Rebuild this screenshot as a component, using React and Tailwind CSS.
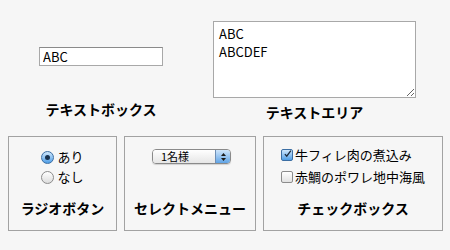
const font = "font-['Noto_Sans_CJK_JP',sans-serif]";

const Radio = ({ checked, label }) => (
  <div className="flex items-center h-[20px] gap-[3px]">
    {checked ? (
      <span className="w-[13px] h-[13px] rounded-full border border-[#3b6ea3] bg-gradient-to-b from-[#cfe7fb] to-[#4d9ee6] flex items-center justify-center">
        <span className="w-[5px] h-[5px] rounded-full bg-[#18314d]" />
      </span>
    ) : (
      <span className="w-[13px] h-[13px] rounded-full border border-[#8c8c8c] bg-gradient-to-b from-[#ffffff] to-[#dcdcdc]" />
    )}
    <span className="text-[13px] leading-[20px] text-black">{label}</span>
  </div>
);

const Check = ({ checked, label }) => (
  <div className="flex items-center h-[22px] gap-[2px]">
    {checked ? (
      <span className="w-[12px] h-[12px] rounded-[2px] border border-[#3b6ea3] bg-gradient-to-b from-[#cfe7fb] to-[#4d9ee6] flex items-center justify-center">
        <svg width="12" height="12" viewBox="0 0 12 12" className="-mt-[2px] ml-[1px]">
          <path d="M2.5 6.2 L5 9 L10.5 1.5" fill="none" stroke="#1d2c3d" strokeWidth="1.8" />
        </svg>
      </span>
    ) : (
      <span className="w-[12px] h-[12px] rounded-[2px] border border-[#8c8c8c] bg-gradient-to-b from-[#ffffff] to-[#e2e2e2]" />
    )}
    <span className="text-[13px] leading-[22px] text-black">{label}</span>
  </div>
);

const Box = ({ width, label, children }) => (
  <div className={`${width} h-[95px] border border-[#a2a2a2] flex flex-col items-center`}>
    {children}
    <div className="mt-auto pb-[12px] text-[14px] leading-[20px] font-bold text-black">
      {label}
    </div>
  </div>
);

export default function App() {
  return (
    <div className={`w-[450px] h-[250px] bg-[#f6f6f6] ${font} overflow-hidden`}>

      <div className="flex h-[136px]">

        <div className="w-[213px] pl-[39px] pt-[47px]">
          <div className="w-[124px] flex flex-col items-center">
            <input
              type="text"
              readOnly
              defaultValue="ABC"
              className="w-[124px] h-[19px] border border-[#a8a8a8] border-t-[#8a8a8a] bg-white px-[3px] text-[13px] leading-[17px] text-black outline-none"
            />
            <div className="mt-[33px] text-[14px] leading-[20px] font-bold text-black">
              テキストボックス
            </div>
          </div>
        </div>

        <div className="w-[203px] pt-[21px] flex flex-col items-center">
          <textarea
            readOnly
            defaultValue={"ABC\nABCDEF"}
            className="w-[203px] h-[77px] border border-[#a8a8a8] bg-white px-[5px] pt-[3px] text-[13px] leading-[18px] text-black outline-none"
          />
          <div className="mt-[4px] text-[14px] leading-[20px] font-bold text-black">
            テキストエリア
          </div>
        </div>

      </div>

      <div className="flex pl-[8px] gap-[7px]">

        <Box width="w-[109px]" label="ラジオボタン">
          <div className="pt-[10px] flex flex-col">
            <Radio checked label="あり" />
            <Radio label="なし" />
          </div>
        </Box>

        <Box width="w-[132px]" label="セレクトメニュー">
          <div className="pt-[12px] pl-[3px]">
            <div className="w-[79px] h-[15px] rounded-[4px] border border-[#8a8a8a] flex overflow-hidden shadow-[0_1px_1px_rgba(0,0,0,0.15)]">
              <div className="flex-1 bg-gradient-to-b from-[#ffffff] to-[#e6e6e6] pl-[8px] text-[11px] leading-[13px] text-black">
                1名様
              </div>
              <div className="w-[15px] border-l border-[#6f8fb5] bg-gradient-to-b from-[#cfe5fa] to-[#5fa4e6] flex items-center justify-center">
                <svg width="7" height="10" viewBox="0 0 7 10">
                  <path d="M3.5 1 L6 4 L1 4 Z" fill="#1b1b1b" />
                  <path d="M3.5 9 L6 6 L1 6 Z" fill="#1b1b1b" />
                </svg>
              </div>
            </div>
          </div>
        </Box>

        <Box width="w-[180px]" label="チェックボックス">
          <div className="pt-[7px] flex flex-col">
            <Check checked label="牛フィレ肉の煮込み" />
            <Check label="赤鯛のポワレ地中海風" />
          </div>
        </Box>

      </div>

    </div>
  );
}
